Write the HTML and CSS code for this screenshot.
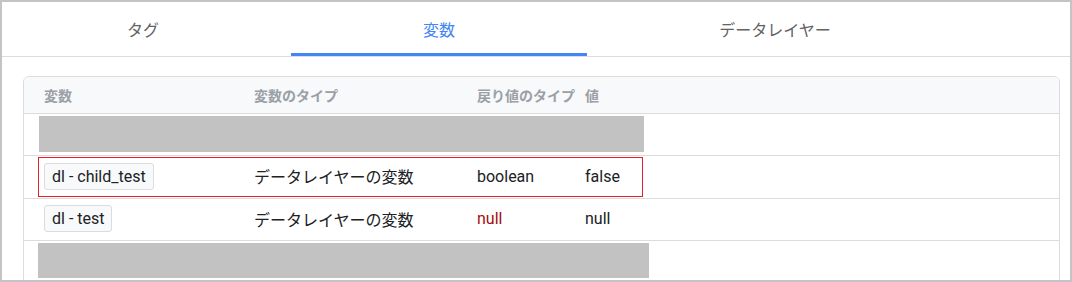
FILE: index.html
```html
<!DOCTYPE html>
<html lang="ja">
<head>
  <meta charset="UTF-8" />
  <title>変数</title>
  <link rel="stylesheet" href="styles.css">
</head>
<body>

<div class="frame">

  <!-- TABS -->
  <div class="tab-bar">
    <div class="tab tab-first">タグ</div>
    <div class="tab active">変数</div>
    <div class="tab tab-last">データレイヤー</div>
  </div>

  <!-- VARIABLE TABLE -->
  <div class="card">
    <div class="row head">
      <div>変数</div>
      <div>変数のタイプ</div>
      <div>戻り値のタイプ</div>
      <div>値</div>
    </div>

    <div class="row masked">
      <div class="redact redact-a"></div>
    </div>

    <div class="row tall">
      <div><span class="chip">dl - child_test</span></div>
      <div>データレイヤーの変数</div>
      <div>boolean</div>
      <div>false</div>
      <div class="highlight"></div>
    </div>

    <div class="row">
      <div><span class="chip">dl - test</span></div>
      <div>データレイヤーの変数</div>
      <div class="type-null">null</div>
      <div>null</div>
    </div>

    <div class="row masked last">
      <div class="redact redact-b"></div>
    </div>
  </div>

</div>

</body>
</html>
```

FILE: styles.css
```css
body {
  margin: 0;
  font-family: Roboto, "Noto Sans CJK JP", sans-serif;
  color: #202124;
  background: #c4c4c4;
}

.frame {
  width: 1072px;
  height: 282px;
  box-sizing: border-box;
  border: 2px solid #c4c4c4;
  background: #ffffff;
  overflow: hidden;
}

.tab-bar {
  display: flex;
  height: 54px;
  border-bottom: 1px solid #dadce0;
}

.tab {
  width: 296px;
  box-sizing: border-box;
  display: flex;
  align-items: center;
  justify-content: center;
  font-size: 16px;
  color: #5f6368;
  border-bottom: 3px solid transparent;
  padding-top: 3px;
}

.tab-first {
  width: 289px;
  padding-right: 7px;
}

.tab-last {
  width: 376px;
}

.tab.active {
  color: #4285f4;
  border-bottom-color: #4285f4;
}

.card {
  margin: 19px 10px 0 21px;
  border: 1px solid #dadce0;
  border-radius: 6px 6px 0 0;
  overflow: hidden;
}

.row {
  position: relative;
  display: grid;
  grid-template-columns: 210px 223px 108px 1fr;
  align-items: center;
  height: 42px;
  box-sizing: border-box;
  padding: 0 0 2px 20px;
  border-bottom: 1px solid #dadce0;
  font-size: 16px;
}

.row.tall {
  height: 43px;
}

.row.head {
  height: 37px;
  padding-bottom: 0;
  background: #f8f9fa;
  font-size: 14px;
  font-weight: bold;
  color: #9aa0a6;
}

.row.masked {
  display: block;
  height: 42px;
  padding: 2px 0 0 0;
}

.row.last {
  border-bottom: none;
}

.redact {
  background: #c2c2c2;
}

.redact-a {
  margin-left: 15px;
  width: 605px;
  height: 36px;
}

.redact-b {
  margin-left: 14px;
  width: 611px;
  height: 35px;
}

.chip {
  display: inline-block;
  height: 27px;
  line-height: 25px;
  box-sizing: border-box;
  padding: 0 7px;
  background: #f8f9fa;
  border: 1px solid #dadce0;
  border-radius: 3px;
}

.type-null {
  color: #a50e0e;
}

.highlight {
  position: absolute;
  top: 1px;
  left: 14px;
  width: 605px;
  height: 40px;
  box-sizing: border-box;
  border: 1px solid #e0202a;
}
```
